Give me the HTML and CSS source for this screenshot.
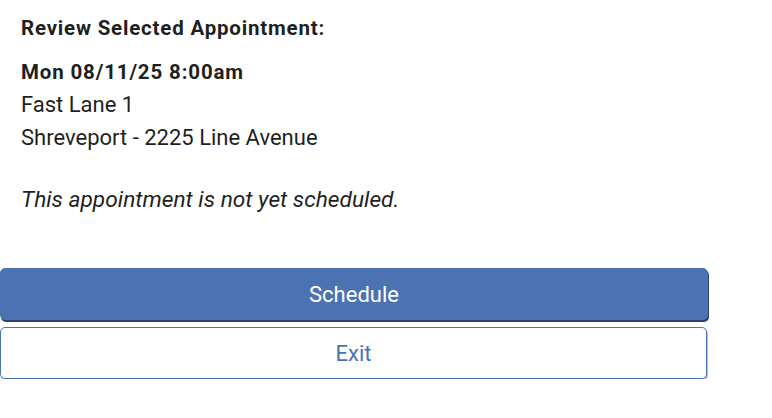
FILE: index.html
```html
<!DOCTYPE html>
<html>
<head>
  <title>Review Appointment</title>
  <link rel="stylesheet" href="styles.css">
</head>
<body>
  <div class="panel">
    <div class="details">
      <div class="heading">Review Selected Appointment:</div>
      <div class="when">Mon 08/11/25 8:00am</div>
      <div class="line">Fast Lane 1</div>
      <div class="line">Shreveport - 2225 Line Avenue</div>
      <div class="note">This appointment is not yet scheduled.</div>
    </div>
    <div class="actions">
      <button class="btn btn-primary">Schedule</button>
      <button class="btn btn-outline">Exit</button>
    </div>
  </div>
</body>
</html>
```

FILE: styles.css
```css
body {
  margin: 0;
  background: #fff;
  font-family: Roboto, "Liberation Sans", sans-serif;
  color: #1f1f1f;
}

.panel {
  width: 708px;
}

.details {
  padding: 16px 21px 0;
}

.heading {
  font-size: 20.5px;
  font-weight: bold;
  line-height: 24px;
  letter-spacing: 0.8px;
  margin-bottom: 20px;
}

.when {
  font-size: 20.5px;
  font-weight: bold;
  line-height: 24px;
  letter-spacing: 0.85px;
  margin-bottom: 4px;
}

.line {
  font-size: 22px;
  line-height: 33px;
}

.note {
  font-size: 22.7px;
  font-style: italic;
  line-height: 33px;
  margin-top: 29px;
}

.actions {
  display: flex;
  flex-direction: column;
  gap: 7px;
  margin-top: 52px;
}

.btn {
  display: block;
  width: 100%;
  height: 52px;
  padding: 0;
  font-family: inherit;
  font-size: 22px;
  border-radius: 5px;
  cursor: pointer;
}

.btn-primary {
  background: #4b72b3;
  color: #fff;
  border: 1px solid #4b72b3;
  box-shadow: 1px 2px 0 #2b436c;
}

.btn-outline {
  width: 707px;
  background: #fff;
  color: #4b72b3;
  border: 1px solid #4b72b3;
  box-shadow: 1px 2px 1px #a9bbdf;
}
```
